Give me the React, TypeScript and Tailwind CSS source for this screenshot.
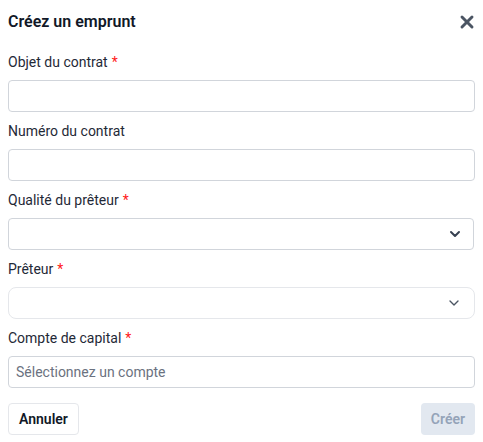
import { ChevronDown, X } from 'lucide-react'

const Req = () => <span className="ml-1 text-[#ff1a1a]">*</span>

function Label({ text, required }: { text: string; required?: boolean }) {
  return (
    <label className="mb-2 block text-sm leading-5 text-[#1f2937]">
      {text}
      {required && <Req />}
    </label>
  )
}

export default function App() {
  return (
    <div className="w-[483px] h-[442px] bg-white px-2 pt-[10px] font-['Roboto',sans-serif]">
      <div className="flex items-center justify-between">
        <h2 className="text-base font-semibold leading-6 text-[#111827]">Créez un emprunt</h2>
        <button className="-mr-0.5 text-[#4b5563]">
          <X className="h-5 w-5" strokeWidth={3.5} />
        </button>
      </div>

      <div className="mt-[18px] flex flex-col gap-[9px]">
        <div>
          <Label text="Objet du contrat" required />
          <input className="h-8 w-full rounded border border-[#d1d5db] px-2 text-sm outline-none" />
        </div>
        <div>
          <Label text="Numéro du contrat" />
          <input className="h-8 w-full rounded border border-[#d1d5db] px-2 text-sm outline-none" />
        </div>
        <div>
          <Label text="Qualité du prêteur" required />
          <div className="flex h-8 w-[466px] items-center justify-end rounded border border-[#d1d5db] pr-2.5">
            <ChevronDown className="h-4 w-4 text-[#374151]" strokeWidth={3} />
          </div>
        </div>
        <div>
          <Label text="Prêteur" required />
          <div className="flex h-8 w-full items-center justify-end rounded-lg border border-[#e5e7eb] pr-3">
            <ChevronDown className="h-4 w-4 text-[#4b5563]" strokeWidth={2} />
          </div>
        </div>
        <div>
          <Label text="Compte de capital" required />
          <input
            placeholder="Sélectionnez un compte"
            className="h-8 w-full rounded border border-[#d1d5db] px-[7px] text-sm outline-none placeholder:text-[#6b7280]"
          />
        </div>
      </div>

      <div className="mt-[15px] flex justify-between">
        <button className="h-8 rounded border border-[#e5e7eb] px-[10px] text-sm font-semibold text-[#111827]">
          Annuler
        </button>
        <button className="h-8 rounded bg-[#e2e8f0] px-[10px] text-sm font-semibold text-[#94a3b8]">
          Créer
        </button>
      </div>
    </div>
  )
}
